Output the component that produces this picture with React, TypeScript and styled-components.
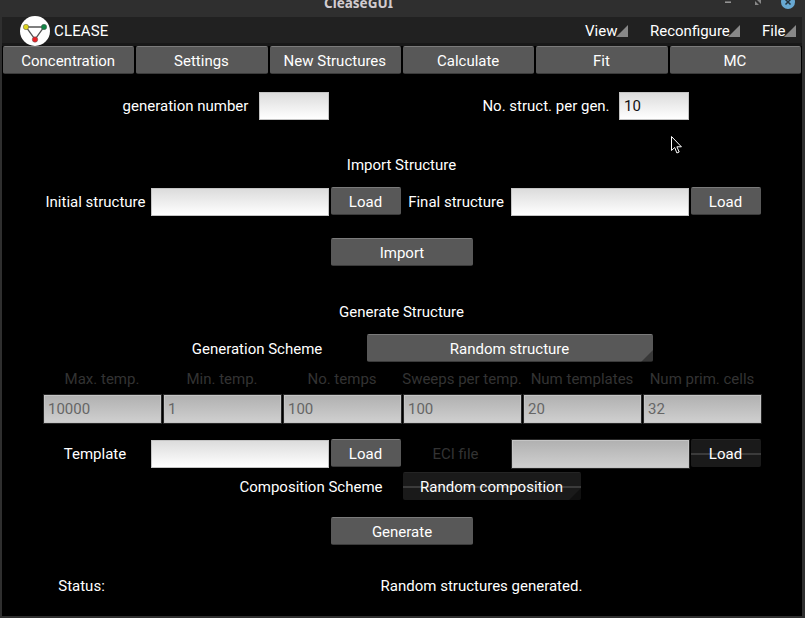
import React from 'react';
import styled, { createGlobalStyle, css } from 'styled-components';

const GlobalStyle = createGlobalStyle`
  * { box-sizing: border-box; }
  html, body { margin: 0; background: #2f2f2f; overflow: hidden; }
  button, input { font: inherit; letter-spacing: inherit; margin: 0; outline: none; }
`;

const Window = styled.div`
  position: relative;
  width: 805px;
  height: 618px;
  display: flex;
  flex-direction: column;
  overflow: hidden;
  background: #2f2f2f;
  color: #fff;
  font: 15px/20px Roboto, "Liberation Sans", sans-serif;
`;

const TitleBar = styled.header`
  height: 17px;
  flex: none;
  display: flex;
  align-items: flex-start;
  justify-content: flex-end;
  padding-right: 10px;
`;

const WindowTitle = styled.h1`
  flex: 1;
  margin: -7px 0 0 324px;
  color: #d2cccf;
  font: 700 13.5px/20px "Noto Sans", sans-serif;
`;

const WindowControls = styled.svg`
  display: block;
  width: 75px;
  height: 10px;
`;

const Client = styled.main`
  width: 800px;
  height: 599px;
  margin-left: 2px;
  display: flex;
  flex-direction: column;
  background: #000;
`;

const MenuBar = styled.nav`
  height: 29px;
  flex: none;
  display: flex;
  align-items: center;
  padding: 0 6px 0 17px;
  background: linear-gradient(#212121 0 26px, #181818 26px);
`;

const Logo = styled.svg`
  width: 32px;
  height: 32px;
  flex: none;
  margin-top: -1px;
`;

const AppName = styled.span`
  flex: 1;
  margin-left: 3px;
  margin-top: -1px;
  letter-spacing: 0.15px;
`;

const MenuItem = styled.div<{ $gap: number; $w: number }>`
  position: relative;
  height: 20px;
  margin-top: -1px;
  width: ${p => p.$w}px;
  margin-left: ${p => p.$gap}px;
  white-space: nowrap;

  &::before {
    content: '';
    position: absolute;
    right: 0;
    bottom: 4px;
    width: 12px;
    height: 12px;
    background: #888;
    clip-path: polygon(100% 0, 100% 100%, 0 100%);
  }
`;

const MenuText = styled.span`
  position: relative;
`;

const Tabs = styled.div`
  display: grid;
  grid-template-columns: repeat(6, 1fr);
  gap: 2px;
  padding: 0 1px;
`;

const Button = styled.button<{ $w?: number; $gap?: number; $dropdown?: boolean }>`
  position: relative;
  flex: none;
  height: 28px;
  width: ${p => (p.$w ? `${p.$w}px` : 'auto')};
  margin-left: ${p => p.$gap ?? 0}px;
  padding: 1px 1px 0 0;
  border: 0;
  border-radius: 2px;
  color: #fff;
  white-space: nowrap;
  background: linear-gradient(#7b7b7b 0 1px, #585858 1px 27px, #3b3b3b 27px);

  &:disabled {
    background: linear-gradient(#242424 0 1px, #1a1a1a 1px 14px, #3b3b3b 14px 16px, #1a1a1a 16px);
  }

  ${p => p.$dropdown && css`
    &::after {
      content: '';
      position: absolute;
      right: 0;
      bottom: 0;
      width: 12px;
      height: 12px;
      background: rgba(0, 0, 0, 0.36);
      clip-path: polygon(100% 0, 100% 100%, 0 100%);
    }
  `}
`;

const ActionButton = styled(Button)`
  width: 142px;
  padding: 1px 0 0;
`;

const LoadButton = styled(Button)`
  width: 70px;
  padding: 0 1px 1px 0;
`;

const Row = styled.div<{ $top: number; $h: number; $left?: number; $center?: boolean }>`
  display: flex;
  flex: none;
  align-items: center;
  height: ${p => p.$h}px;
  margin-top: ${p => p.$top}px;
  padding-left: ${p => p.$left ?? 0}px;
  justify-content: ${p => (p.$center ? 'center' : 'flex-start')};
`;

const Heading = styled(Row)`
  padding-right: 1px;
`;

const FileRow = styled(Row)`
  align-items: flex-start;
  line-height: 30px;
`;

const Label = styled.label<{ $w: number; $dim?: boolean; $gap?: number; $drop?: number; $inset?: number }>`
  flex: none;
  width: ${p => p.$w}px;
  margin-left: ${p => p.$gap ?? 0}px;
  padding-right: ${p => p.$inset ?? 1}px;
  padding-top: ${p => p.$drop ?? 0}px;
  text-align: center;
  white-space: nowrap;
  color: ${p => (p.$dim ? '#333' : '#fff')};
`;

const Field = styled.input<{ $w: number; $top?: number }>`
  flex: none;
  width: ${p => p.$w}px;
  height: 28px;
  margin-top: ${p => p.$top ?? 0}px;
  padding: 0 0 1px 4px;
  border: 1px solid #c4c4c4;
  border-radius: 0;
  color: #111;
  background: linear-gradient(#dcdcdc, #fff);

  &:disabled {
    height: 30px;
    margin-top: 0;
    border: 1px solid #272727;
    color: #666;
    background: linear-gradient(#b0b0b0, #d0d0d0);
    box-shadow: inset 0 0 0 1px #c5c5c5;
  }
`;

const ParameterFields = styled.div`
  display: grid;
  flex: none;
  grid-template-columns: repeat(6, 119px);
  gap: 1px;
  height: 30px;
  margin: 5px 0 0 41px;
`;

const Pointer = styled.svg`
  position: absolute;
  left: 671px;
  top: 136px;
  width: 12px;
  height: 19px;
`;

const tabs = ['Concentration', 'Settings', 'New Structures', 'Calculate', 'Fit', 'MC'];

const parameters = [
  { name: 'Max. temp.', value: '10000' },
  { name: 'Min. temp.', value: '1' },
  { name: 'No. temps', value: '100' },
  { name: 'Sweeps per temp.', value: '100' },
  { name: 'Num templates', value: '20' },
  { name: 'Num prim. cells', value: '32' },
];

export default function App() {
  return (
    <Window>
      <GlobalStyle />
      <TitleBar>
        <WindowTitle>CleaseGUI</WindowTitle>
        <WindowControls viewBox="0 0 75 10">
          <path d="M5 2.2h6" stroke="#999" strokeWidth="1.5" />
          <path d="M37 0h4v4zM35 1v4h4z" fill="#888" />
          <circle cx="68" cy="2" r="7" fill="#68a9d3" />
          <path d="M65.5-.5l5 5m0-5l-5 5" stroke="#24323c" strokeWidth="1.5" />
        </WindowControls>
      </TitleBar>
      <Client>
        <MenuBar>
          <Logo viewBox="0 0 32 32">
            <circle cx="16" cy="16" r="15" fill="#fff" />
            <path d="M7 12h18l-9 12.5z" fill="none" stroke="#555" strokeWidth="1.3" />
            <g stroke="#555" strokeWidth=".5">
              <circle cx="7" cy="12" r="2.7" fill="#ded51d" />
              <circle cx="25" cy="12" r="2.7" fill="#128846" />
              <circle cx="16" cy="24.5" r="2.7" fill="#ed2024" />
            </g>
          </Logo>
          <AppName>CLEASE</AppName>
          <MenuItem $w={43} $gap={0}><MenuText>View</MenuText></MenuItem>
          <MenuItem $w={90} $gap={22}><MenuText>Reconfigure</MenuText></MenuItem>
          <MenuItem $w={34} $gap={22}><MenuText>File</MenuText></MenuItem>
        </MenuBar>
        <Tabs>
          {tabs.map(tab => <Button key={tab}>{tab}</Button>)}
        </Tabs>

        <Row $top={18} $h={28} $left={112}>
          <Label $w={145} $inset={2}>generation number</Label>
          <Field $w={70} />
          <Label $w={145} $gap={145}>No. struct. per gen.</Label>
          <Field $w={70} defaultValue="10" />
        </Row>

        <Heading $top={35} $h={20} $center>Import Structure</Heading>
        <FileRow $top={12} $h={29} $left={40}>
          <Label $w={109} $inset={2}>Initial structure</Label>
          <Field $w={178} $top={1} />
          <LoadButton $gap={2}>Load</LoadButton>
          <Label $w={110} $inset={0}>Final structure</Label>
          <Field $w={178} $top={1} />
          <LoadButton $gap={2}>Load</LoadButton>
        </FileRow>
        <Row $top={22} $h={28} $center><ActionButton>Import</ActionButton></Row>

        <Heading $top={36} $h={20} $center>Generate Structure</Heading>
        <Row $top={12} $h={28} $left={146}>
          <Label $w={219} $drop={2}>Generation Scheme</Label>
          <Button $w={286} $dropdown>Random structure</Button>
        </Row>

        <Row $top={7} $h={20} $left={40}>
          {parameters.map(p => <Label key={p.name} $w={120} $dim $inset={0}>{p.name}</Label>)}
        </Row>
        <ParameterFields>
          {parameters.map(p => <Field key={p.name} $w={119} defaultValue={p.value} disabled />)}
        </ParameterFields>

        <FileRow $top={15} $h={29} $left={40}>
          <Label $w={109} $inset={3}>Template</Label>
          <Field $w={178} $top={1} />
          <LoadButton $gap={2}>Load</LoadButton>
          <Label $w={110} $dim>ECI file</Label>
          <Field $w={179} disabled />
          <LoadButton $gap={1} disabled>Load</LoadButton>
        </FileRow>
        <Row $top={4} $h={28} $left={218}>
          <Label $w={183} $drop={2}>Composition Scheme</Label>
          <Button $w={178} $dropdown disabled>Random composition</Button>
        </Row>
        <Row $top={17} $h={28} $center><ActionButton>Generate</ActionButton></Row>

        <Row $top={31} $h={20}>
          <Label $w={159} $inset={0}>Status:</Label>
          <Label $w={641} $inset={0}>Random structures generated.</Label>
        </Row>
      </Client>
      <Pointer viewBox="0 0 12 19">
        <path d="M.5.5v14l3.2-3 2.2 5.5 2.3-1-2.3-5.2h4.5z" fill="#000" stroke="#fff" />
      </Pointer>
    </Window>
  );
}
